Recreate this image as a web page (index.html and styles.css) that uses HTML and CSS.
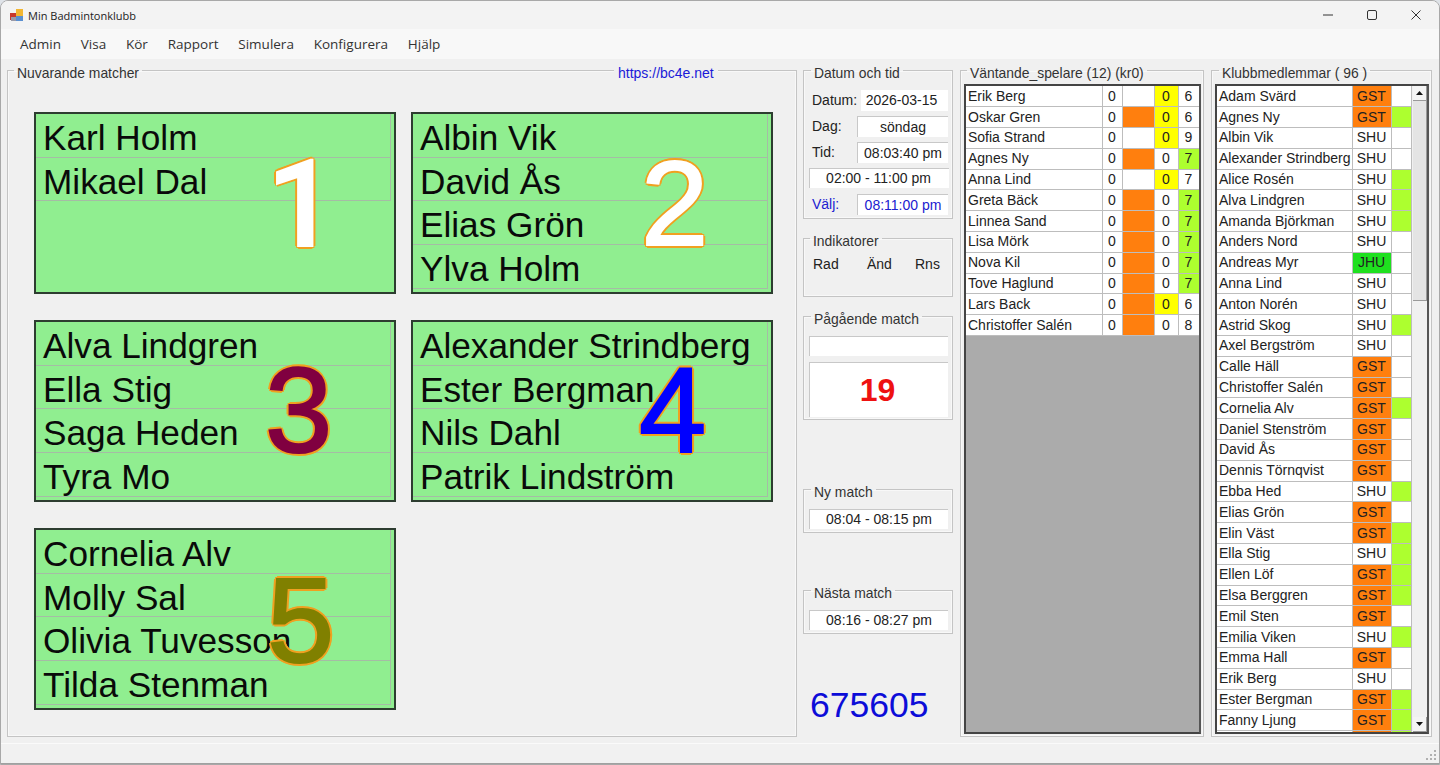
FILE: index.html
```html
<!DOCTYPE html>
<html lang="sv">
<head>
    <meta charset="UTF-8">
    <meta name="viewport" content="width=device-width, initial-scale=1.0">
    <title>Min Badmintonklubb</title>
    <link rel="stylesheet" href="styles.css">
</head>
<body>
    <div class="window">
        <!-- Title bar -->
        <div class="titlebar">
            <svg class="app-icon" width="14" height="14" viewBox="0 0 14 14">
                <rect x="0" y="5" width="7" height="7" fill="#c8372d"/>
                <rect x="6" y="1" width="7" height="7" fill="#f2b632"/>
                <rect x="6" y="8" width="7" height="5" fill="#5a8fd0"/>
                <rect x="1" y="9" width="5" height="4" fill="#9a9aa8"/>
            </svg>
            <span class="app-title">Min Badmintonklubb</span>
            <div class="win-controls">
                <svg width="12" height="12" viewBox="0 0 12 12"><path d="M1 6h10" stroke="#333" fill="none"/></svg>
                <svg width="12" height="12" viewBox="0 0 12 12"><rect x="1.5" y="1.5" width="9" height="9" rx="1.5" stroke="#333" fill="none"/></svg>
                <svg width="12" height="12" viewBox="0 0 12 12"><path d="M1.5 1.5l9 9M10.5 1.5l-9 9" stroke="#333" fill="none"/></svg>
            </div>
        </div>

        <!-- Menu -->
        <div class="menubar">
            <span>Admin</span>
            <span>Visa</span>
            <span>Kör</span>
            <span>Rapport</span>
            <span>Simulera</span>
            <span>Konfigurera</span>
            <span>Hjälp</span>
        </div>

        <div class="main">
            <!-- Courts -->
            <fieldset class="group courts-group">
                <legend>Nuvarande matcher</legend>
                <a class="site-link">https://bc4e.net</a>
                <div class="courts">
                    <div class="court">
                        <div class="player">Karl Holm</div>
                        <div class="player">Mikael Dal</div>
                        <div class="court-no no1">1</div>
                    </div>
                    <div class="court">
                        <div class="player">Albin Vik</div>
                        <div class="player">David Ås</div>
                        <div class="player">Elias Grön</div>
                        <div class="player">Ylva Holm</div>
                        <div class="court-no no2">2</div>
                    </div>
                    <div class="court">
                        <div class="player">Alva Lindgren</div>
                        <div class="player">Ella Stig</div>
                        <div class="player">Saga Heden</div>
                        <div class="player">Tyra Mo</div>
                        <div class="court-no no3">3</div>
                    </div>
                    <div class="court">
                        <div class="player">Alexander Strindberg</div>
                        <div class="player">Ester Bergman</div>
                        <div class="player">Nils Dahl</div>
                        <div class="player">Patrik Lindström</div>
                        <div class="court-no no4">4</div>
                    </div>
                    <div class="court">
                        <div class="player">Cornelia Alv</div>
                        <div class="player">Molly Sal</div>
                        <div class="player">Olivia Tuvesson</div>
                        <div class="player">Tilda Stenman</div>
                        <div class="court-no no5">5</div>
                    </div>
                </div>
            </fieldset>

            <!-- Date, time and match info -->
            <div class="info-col">
                <fieldset class="group date-group">
                    <legend>Datum och tid</legend>
                    <div class="field-row"><span class="field-label">Datum:</span><span class="field plain">2026-03-15</span></div>
                    <div class="field-row"><span class="field-label">Dag:</span><span class="field">söndag</span></div>
                    <div class="field-row"><span class="field-label">Tid:</span><span class="field">08:03:40 pm</span></div>
                    <div class="field-row"><span class="field wide">02:00 - 11:00 pm</span></div>
                    <div class="field-row blue"><span class="field-label">Välj:</span><span class="field">08:11:00 pm</span></div>
                </fieldset>

                <fieldset class="group indicator-group">
                    <legend>Indikatorer</legend>
                    <div class="indicators"><span>Rad</span><span>Änd</span><span>Rns</span></div>
                </fieldset>

                <fieldset class="group running-group">
                    <legend>Pågående match</legend>
                    <div class="field wide"></div>
                    <div class="match-no">19</div>
                </fieldset>

                <fieldset class="group time-group new-match">
                    <legend>Ny match</legend>
                    <div class="field wide">08:04 - 08:15 pm</div>
                </fieldset>

                <fieldset class="group time-group next-match">
                    <legend>Nästa match</legend>
                    <div class="field wide">08:16 - 08:27 pm</div>
                </fieldset>

                <div class="counter">675605</div>
            </div>

            <!-- Waiting players -->
            <fieldset class="group waiting-group">
                <legend>Väntande_spelare (12) (kr0)</legend>
                <div class="list-frame">
                    <table class="grid waiting">
                        <tr><td>Erik Berg</td><td class="c">0</td><td></td><td class="c yellow">0</td><td class="c">6</td></tr>
                        <tr><td>Oskar Gren</td><td class="c">0</td><td class="orange"></td><td class="c yellow">0</td><td class="c">6</td></tr>
                        <tr><td>Sofia Strand</td><td class="c">0</td><td></td><td class="c yellow">0</td><td class="c">9</td></tr>
                        <tr><td>Agnes Ny</td><td class="c">0</td><td class="orange"></td><td class="c">0</td><td class="c lime">7</td></tr>
                        <tr><td>Anna Lind</td><td class="c">0</td><td></td><td class="c yellow">0</td><td class="c">7</td></tr>
                        <tr><td>Greta Bäck</td><td class="c">0</td><td class="orange"></td><td class="c">0</td><td class="c lime">7</td></tr>
                        <tr><td>Linnea Sand</td><td class="c">0</td><td class="orange"></td><td class="c">0</td><td class="c lime">7</td></tr>
                        <tr><td>Lisa Mörk</td><td class="c">0</td><td class="orange"></td><td class="c">0</td><td class="c lime">7</td></tr>
                        <tr><td>Nova Kil</td><td class="c">0</td><td class="orange"></td><td class="c">0</td><td class="c lime">7</td></tr>
                        <tr><td>Tove Haglund</td><td class="c">0</td><td class="orange"></td><td class="c">0</td><td class="c lime">7</td></tr>
                        <tr><td>Lars Back</td><td class="c">0</td><td class="orange"></td><td class="c yellow">0</td><td class="c">6</td></tr>
                        <tr><td>Christoffer Salén</td><td class="c">0</td><td class="orange"></td><td class="c">0</td><td class="c">8</td></tr>
                    </table>
                </div>
            </fieldset>

            <!-- Club members -->
            <fieldset class="group members-group">
                <legend>Klubbmedlemmar ( 96 )</legend>
                <div class="list-frame members-frame">
                    <table class="grid members">
                        <tr><td>Adam Svärd</td><td class="c orange">GST</td><td></td></tr>
                        <tr><td>Agnes Ny</td><td class="c orange">GST</td><td class="lime"></td></tr>
                        <tr><td>Albin Vik</td><td class="c">SHU</td><td></td></tr>
                        <tr><td>Alexander Strindberg</td><td class="c">SHU</td><td></td></tr>
                        <tr><td>Alice Rosén</td><td class="c">SHU</td><td class="lime"></td></tr>
                        <tr><td>Alva Lindgren</td><td class="c">SHU</td><td class="lime"></td></tr>
                        <tr><td>Amanda Björkman</td><td class="c">SHU</td><td class="lime"></td></tr>
                        <tr><td>Anders Nord</td><td class="c">SHU</td><td></td></tr>
                        <tr><td>Andreas Myr</td><td class="c green">JHU</td><td></td></tr>
                        <tr><td>Anna Lind</td><td class="c">SHU</td><td></td></tr>
                        <tr><td>Anton Norén</td><td class="c">SHU</td><td></td></tr>
                        <tr><td>Astrid Skog</td><td class="c">SHU</td><td class="lime"></td></tr>
                        <tr><td>Axel Bergström</td><td class="c">SHU</td><td></td></tr>
                        <tr><td>Calle Häll</td><td class="c orange">GST</td><td></td></tr>
                        <tr><td>Christoffer Salén</td><td class="c orange">GST</td><td></td></tr>
                        <tr><td>Cornelia Alv</td><td class="c orange">GST</td><td class="lime"></td></tr>
                        <tr><td>Daniel Stenström</td><td class="c orange">GST</td><td></td></tr>
                        <tr><td>David Ås</td><td class="c orange">GST</td><td></td></tr>
                        <tr><td>Dennis Törnqvist</td><td class="c orange">GST</td><td></td></tr>
                        <tr><td>Ebba Hed</td><td class="c">SHU</td><td class="lime"></td></tr>
                        <tr><td>Elias Grön</td><td class="c orange">GST</td><td></td></tr>
                        <tr><td>Elin Väst</td><td class="c orange">GST</td><td class="lime"></td></tr>
                        <tr><td>Ella Stig</td><td class="c">SHU</td><td class="lime"></td></tr>
                        <tr><td>Ellen Löf</td><td class="c orange">GST</td><td class="lime"></td></tr>
                        <tr><td>Elsa Berggren</td><td class="c orange">GST</td><td class="lime"></td></tr>
                        <tr><td>Emil Sten</td><td class="c orange">GST</td><td></td></tr>
                        <tr><td>Emilia Viken</td><td class="c">SHU</td><td class="lime"></td></tr>
                        <tr><td>Emma Hall</td><td class="c orange">GST</td><td></td></tr>
                        <tr><td>Erik Berg</td><td class="c">SHU</td><td></td></tr>
                        <tr><td>Ester Bergman</td><td class="c orange">GST</td><td class="lime"></td></tr>
                        <tr><td>Fanny Ljung</td><td class="c orange">GST</td><td class="lime"></td></tr>
                        <tr><td></td><td class="orange"></td><td class="lime"></td></tr>
                    </table>
                    <div class="scrollbar">
                        <div class="scroll-btn"><svg width="7" height="4" viewBox="0 0 7 4"><path d="M3.5 0L7 4H0z" fill="#111"/></svg></div>
                        <div class="scroll-thumb"></div>
                        <div class="scroll-track"></div>
                        <div class="scroll-btn"><svg width="7" height="4" viewBox="0 0 7 4"><path d="M0 0h7L3.5 4z" fill="#111"/></svg></div>
                    </div>
                </div>
            </fieldset>
        </div>

        <!-- Status bar -->
        <div class="statusbar">
            <svg class="grip" width="12" height="12" viewBox="0 0 12 12" fill="#b0b0b0">
                <rect x="9" y="1" width="2" height="2"/>
                <rect x="5" y="5" width="2" height="2"/><rect x="9" y="5" width="2" height="2"/>
                <rect x="1" y="9" width="2" height="2"/><rect x="5" y="9" width="2" height="2"/><rect x="9" y="9" width="2" height="2"/>
            </svg>
        </div>
    </div>
</body>
</html>
```

FILE: styles.css
```css
/* General reset */
* {
    margin: 0;
    padding: 0;
    box-sizing: border-box;
}

html, body {
    height: 100%;
    overflow: hidden;
    background-color: #dfe3e8;
}

body {
    font-family: "Liberation Sans", Arial, sans-serif;
    color: #222;
}

.window {
    width: 1440px;
    height: 765px;
    display: flex;
    flex-direction: column;
    background-color: #f0f0f0;
    border: 1px solid #a8a8a8;
    border-radius: 8px 8px 0 0;
    overflow: hidden;
}

/* Title bar */
.titlebar {
    height: 28px;
    display: flex;
    align-items: center;
    padding-left: 9px;
    background-color: #f3f3f3;
    flex: none;
}

.app-title {
    font-family: "Open Sans", sans-serif;
    font-size: 11px;
    margin-left: 4px;
    color: #222;
}

.win-controls {
    margin-left: auto;
    margin-right: 17px;
    display: flex;
    gap: 32px;
}

/* Menu */
.menubar {
    height: 30px;
    flex: none;
    display: flex;
    align-items: center;
    gap: 19.8px;
    padding-left: 19px;
    background-color: #f8f8f8;
    font-family: "Open Sans", sans-serif;
    font-size: 13.5px;
    color: #333;
}

/* Main area */
.main {
    flex: 1;
    display: flex;
    align-items: flex-start;
    padding-left: 6px;
}

/* Group boxes */
.group {
    border: 1px solid #c4c4c4;
    box-shadow: inset 0 0 0 1px #f8f8f8;
    position: relative;
    min-width: 0;
}

/* the legend sits a little below the group's top line */
.group legend {
    margin-left: 6px;
    padding: 6px 3px 0;
    font-size: 13.9px;
    line-height: 16px;
    color: #333;
}

.courts-group {
    width: 790px;
    height: 678px;
    margin-right: 6px;
}

.site-link {
    position: absolute;
    top: -16px;
    left: 606px;
    padding: 0 4px;
    background-color: #f0f0f0;
    color: #1a1ad8;
    font-size: 14px;
    line-height: 16px;
}

.courts {
    display: grid;
    grid-template-columns: 362px 362px;
    grid-auto-rows: 182px;
    column-gap: 15px;
    row-gap: 26px;
    padding: 31px 0 0 26px;
}

.court {
    position: relative;
    background-color: #90ee90;
    border: 2px solid #2d3d30;
    padding: 0 3px 4px 0;
}

.player {
    height: 43.7px;
    padding: 3px 0 0 7px;
    font-size: 35.2px;
    line-height: 41px;
    color: #0a0a0a;
    white-space: nowrap;
    border-bottom: 1px solid #a5bca5;
    border-right: 1px solid #a5bca5;
}

/* the text stroke thickens the digit, the shadows make its orange edge */
.court-no {
    position: absolute;
    font-size: 121px;
    line-height: 121px;
    -webkit-text-stroke: 2px;
    text-shadow: 3px 0 #f0a020, -3px 0 #f0a020, 0 3px #f0a020, 0 -3px #f0a020,
        2px 2px #f0a020, -2px 2px #f0a020, 2px -2px #f0a020, -2px -2px #f0a020;
}

/* Liberation's 1 has a foot, the reference's has none */
.no1 { left: 231px; top: 31px; color: #fff; font-family: Roboto, sans-serif; font-weight: 500; }
.no2 { left: 228px; top: 29px; color: #fff; }
.no3 { left: 229px; top: 28px; color: #800040; }
.no4 { left: 226px; top: 28px; color: #0000ff; }
.no5 { left: 231px; top: 30px; color: #808000; }

/* Info column */
.info-col {
    width: 150px;
    flex: none;
    margin-right: 7px;
    font-size: 14px;
}

.info-col legend {
    margin-left: 2px;
}

.date-group {
    height: 160px;
    padding: 6px 4px 0 8px;
}

.date-group legend {
    margin-left: -1px;
}

.field-row {
    display: flex;
    align-items: center;
    height: 26px;
    font-size: 14px;
}

.field-label {
    width: 45px;
    flex: none;
}

.field {
    flex: 1;
    height: 21px;
    background-color: #fff;
    border-top: 1px solid #c8c8c8;
    border-left: 1px solid #c8c8c8;
    text-align: center;
    font-size: 14px;
    line-height: 20px;
    color: #222;
}

.plain {
    border: none;
    margin-left: 4px;
    padding-right: 6px;
}

.field.wide {
    flex: none;
    width: 139px;
    height: 20px;
    line-height: 19px;
}

.date-group .field.wide {
    margin-left: -3px;
    width: 140px;
    padding-right: 2px;
}

.blue, .blue .field {
    color: #2020d0;
}

.indicator-group {
    height: 70px;
    margin-top: 8px;
}

.indicator-group legend {
    margin-left: 6px;
}

.indicators {
    display: grid;
    grid-template-columns: 54px 48px auto;
    padding: 7px 0 0 9px;
    line-height: 16px;
}

.running-group {
    height: 115px;
    margin-top: 8px;
    padding: 9px 0 0 5px;
}

.match-no {
    width: 139px;
    height: 55px;
    margin-top: 6px;
    padding-right: 3px;
    background-color: #fff;
    border-top: 1px solid #c8c8c8;
    border-left: 1px solid #c8c8c8;
    color: #ee1111;
    font-size: 32px;
    font-weight: bold;
    line-height: 54px;
    text-align: center;
}

.time-group {
    height: 55px;
    padding: 9px 0 0 5px;
}

.new-match { margin-top: 58px; }
.next-match { margin-top: 46px; }

.counter {
    margin: 51px 0 0 7px;
    font-size: 35.5px;
    line-height: 40px;
    color: #0c0cd8;
}

/* Player lists */
.waiting-group {
    width: 244px;
    height: 678px;
    margin-right: 7px;
    padding: 3px 2px 0 3px;
}

.waiting-group legend {
    margin-left: 3px;
}

.members-group {
    width: 221px;
    height: 678px;
    padding: 3px 2px 0 3px;
}

.members-group legend {
    margin-left: 4px;
}

.list-frame {
    height: 650px;
    background-color: #ababab;
    border: 2px solid #444;
    border-right-color: #555;
    overflow: hidden;
}

.members-frame {
    display: flex;
    background-color: #fff;
}

.grid {
    border-collapse: collapse;
    table-layout: fixed;
    width: 100%;
    background-color: #fff;
    font-size: 14px;
    color: #222;
}

.grid td {
    height: 20.8px;
    padding: 0 0 0 2px;
    border-right: 1px solid #bdbdbd;
    border-bottom: 1px solid #bdbdbd;
    white-space: nowrap;
    overflow: hidden;
    line-height: 19px;
}

.grid td.c {
    padding-left: 0;
    text-align: center;
}

.waiting {
    width: 233px;
}

.waiting td:nth-child(1) { width: 136px; }
.waiting td:nth-child(2) { width: 20px; }
.waiting td:nth-child(3) { width: 32px; }
.waiting td:nth-child(4) { width: 24px; }
.waiting td:nth-child(5) { width: 21px; }

.members {
    width: 194px;
    flex: none;
}

.members td:nth-child(1) { width: 135px; }
.members td:nth-child(2) { width: 39px; }
.members td:nth-child(3) { width: 20px; }

.orange { background-color: #ff7f0e; }
.yellow { background-color: #ffff00; }
.lime { background-color: #adff2f; }
.green { background-color: #1fe01f; }

/* Scrollbar */
.scrollbar {
    flex: 1;
    display: flex;
    flex-direction: column;
    padding-left: 1px;
    background-color: #f0f0f0;
}

.scroll-btn {
    height: 15px;
    flex: none;
    display: flex;
    align-items: center;
    justify-content: center;
    background-color: #f4f4f4;
    border-right: 1px solid #999;
    border-bottom: 1px solid #999;
}

.scroll-thumb {
    height: 200px;
    flex: none;
    background-color: #e4e4e4;
    border-right: 1px solid #999;
    border-bottom: 1px solid #999;
}

.scroll-track {
    flex: 1;
    background-color: #f0f0f0;
}

/* Status bar */
.statusbar {
    height: 21px;
    flex: none;
    display: flex;
    justify-content: flex-end;
    align-items: flex-end;
    padding: 0 2px 2px 0;
    background-color: #f1f1f1;
    border-top: 1px solid #fafafa;
    border-bottom: 1px solid #a0a0a0;
}
```
